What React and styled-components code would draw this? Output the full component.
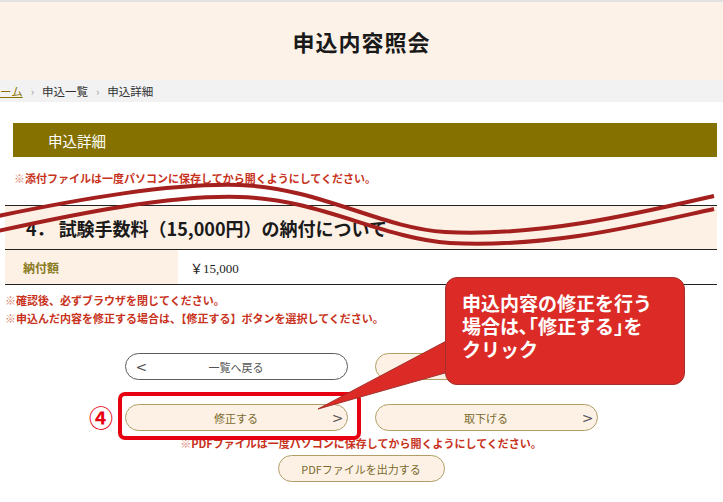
import React from 'react';
import styled, { createGlobalStyle } from 'styled-components';

const GlobalStyle = createGlobalStyle`
  body {
    margin: 0;
    background: #fff;
    font-family: "Noto Sans CJK JP", "Noto Sans", sans-serif;
    color: #222;
  }
`;

const Page = styled.div`
  position: relative;
  width: 723px;
  height: 502px;
  overflow: hidden;
  background: #fff;
`;

const Header = styled.header`
  height: 78px;
  border-top: 2px solid #e2e2e2;
  background: #fdf2e7;
  display: flex;
  align-items: center;
  justify-content: center;
`;

const Title = styled.h1`
  margin: 0;
  font-size: 22px;
  font-weight: 700;
  letter-spacing: 1px;
  color: #1a1a1a;
`;

const Breadcrumb = styled.nav`
  height: 22px;
  background: #f2f2f2;
  display: flex;
  align-items: center;
  gap: 8px;
  font-size: 11.5px;
  color: #333;
`;

const CrumbLink = styled.a`
  color: #8a7200;
  text-decoration: underline;
`;

const Sep = styled.span`
  color: #999;
  font-size: 11px;
`;

const Main = styled.main`
  width: 712px;
  margin-left: 5px;
  padding-top: 21px;
`;

const SectionBar = styled.div`
  margin-left: 8px;
  height: 34px;
  background: #857100;
  color: #fff;
  font-size: 14.5px;
  display: flex;
  align-items: center;
  padding-left: 35px;
`;

const Note = styled.p`
  margin: ${(p) => p.$margin || '0'};
  padding-left: ${(p) => p.$indent || '0'};
  font-size: 11px;
  line-height: 18px;
  font-weight: 700;
  color: #c8321c;
  text-align: ${(p) => (p.$center ? 'center' : 'left')};

  span {
    color: #d9806c;
    font-weight: 400;
  }
`;

const Heading = styled.h2`
  margin: 18px 0 0;
  height: 43px;
  border-top: 1px solid #222;
  border-bottom: 1px solid #222;
  background: #fdf1e6;
  display: flex;
  align-items: center;
  padding-left: 21px;
  font-size: 18px;
  font-weight: 700;
  color: #1a1a1a;
`;

const HeadingNo = styled.span`
  margin-right: 4px;
`;

const Row = styled.div`
  display: grid;
  grid-template-columns: 173px 1fr;
  height: 34px;
  border-bottom: 1px solid #222;
`;

const LabelCell = styled.div`
  background: #fdf1e6;
  display: flex;
  align-items: center;
  padding-left: 18px;
  font-size: 12px;
  font-weight: 700;
  color: #8a7a22;
`;

const ValueCell = styled.div`
  display: flex;
  align-items: center;
  padding-left: 12px;
  font-family: "Liberation Serif", "Noto Sans CJK JP", serif;
  font-size: 13px;
  color: #222;
`;

const ButtonGrid = styled.div`
  margin-top: 26px;
  display: grid;
  grid-template-columns: 223px 223px;
  justify-content: center;
  column-gap: 27px;
  row-gap: 24px;
`;

const Button = styled.button`
  height: 27px;
  width: ${(p) => p.$width || '223px'};
  margin: 0 auto;
  border-radius: 14px;
  border: 1px solid ${(p) => (p.$variant === 'plain' ? '#5c5c5c' : '#b09e66')};
  background: ${(p) => (p.$variant === 'plain' ? '#fff' : '#fdf1e6')};
  color: ${(p) => (p.$variant === 'plain' ? '#555' : '#7a6a2c')};
  font-family: "Noto Sans CJK JP", sans-serif;
  font-size: 11px;
  white-space: nowrap;
  display: grid;
  grid-template-columns: ${(p) => (p.$single ? '1fr' : '28px 1fr 28px')};
  align-items: center;
  padding: 0 3px;
  cursor: pointer;
`;

const Arrow = styled.span`
  font-family: "DejaVu Sans", sans-serif;
  font-size: 14px;
  color: #555;
  text-align: ${(p) => (p.$right ? 'right' : 'left')};
  padding-left: ${(p) => (p.$right ? '0' : '7px')};
`;

const Center = styled.div`
  display: flex;
  justify-content: center;
  margin-top: 3px;
`;

const Overlay = styled.svg`
  position: absolute;
  left: 0;
  top: 0;
  pointer-events: none;
`;

const HighlightBox = styled.div`
  position: absolute;
  left: 118px;
  top: 392px;
  width: 235px;
  height: 40px;
  border: 4px solid #e60012;
  border-radius: 7px;
`;

const StepMark = styled.span`
  position: absolute;
  left: 89px;
  top: 402px;
  font-size: 24px;
  line-height: 30px;
  font-weight: 700;
  color: #e60012;
`;

const Callout = styled.div`
  position: absolute;
  left: 445px;
  top: 277px;
  width: 240px;
  height: 108px;
  box-sizing: border-box;
  padding: 13px 0 0 16px;
  background: #dc2b27;
  border: 1px solid #a3302a;
  border-radius: 12px;
  color: #fff;
  font-size: 19px;
  line-height: 23px;
  font-weight: 700;
`;

export default function App() {
  return (
    <Page>
      <GlobalStyle />
      <Header>
        <Title>申込内容照会</Title>
      </Header>
      <Breadcrumb>
        <CrumbLink href="#">ーム</CrumbLink>
        <Sep>›</Sep>
        <span>申込一覧</span>
        <Sep>›</Sep>
        <span>申込詳細</span>
      </Breadcrumb>

      <Main>
        <SectionBar>申込詳細</SectionBar>
        <Note $margin="12px 0 0" $indent="9px">
          <span>※</span>添付ファイルは一度パソコンに保存してから開くようにしてください。
        </Note>

        <Heading>
          <HeadingNo>4．</HeadingNo>試験手数料（15,000円）の納付について
        </Heading>
        <Row>
          <LabelCell>納付額</LabelCell>
          <ValueCell>￥15,000</ValueCell>
        </Row>

        <Note $margin="6px 0 0">
          <span>※</span>確認後、必ずブラウザを閉じてください。
        </Note>
        <Note>
          <span>※</span>申込んだ内容を修正する場合は、【修正する】ボタンを選択してください。
        </Note>

        <ButtonGrid>
          <Button $variant="plain">
            <Arrow>&lt;</Arrow>
            <span>一覧へ戻る</span>
            <span />
          </Button>
          <Button>
            <span />
            <span />
            <span />
          </Button>
          <Button>
            <span />
            <span>修正する</span>
            <Arrow $right>&gt;</Arrow>
          </Button>
          <Button>
            <span />
            <span>取下げる</span>
            <Arrow $right>&gt;</Arrow>
          </Button>
        </ButtonGrid>

        <Note $center $margin="3px 0 0">
          <span>※</span>PDFファイルは一度パソコンに保存してから開くようにしてください。
        </Note>
        <Center>
          <Button $width="167px" $single>
            <span>PDFファイルを出力する</span>
          </Button>
        </Center>
      </Main>

      <HighlightBox />
      <StepMark>④</StepMark>

      <Overlay width="723" height="502" viewBox="0 0 723 502">
        <g fill="none" stroke="#a3201e" strokeWidth="4" strokeLinecap="butt">
          <path d="M-2 216 C 80 199, 170 183, 240 185 C 320 188, 380 228, 445 232 C 540 237, 640 213, 714 196" />
          <path d="M-2 231 C 80 213, 170 195, 240 197 C 320 199, 380 238, 450 243 C 550 248, 640 225, 714 209" />
        </g>
        <polygon points="452,338 318,409 452,371" fill="#dc2b27" stroke="#a3302a" strokeWidth="1" />
      </Overlay>

      <Callout>
        申込内容の修正を行う
        <br />
        場合は､｢修正する｣を
        <br />
        クリック
      </Callout>
    </Page>
  );
}
